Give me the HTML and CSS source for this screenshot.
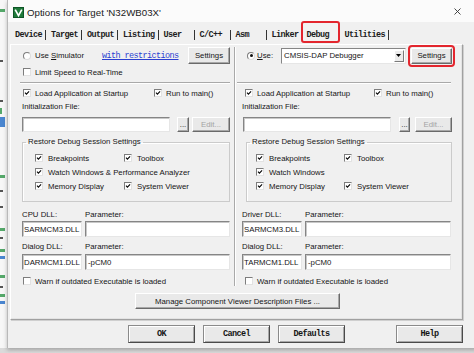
FILE: index.html
```html
<!DOCTYPE html>
<html>
<head>
<meta charset="utf-8">
<title>Options for Target</title>
<link rel="stylesheet" href="styles.css">
</head>
<body>
<div class="desktop">
  <div class="behind">
    <span class="frag g f1"></span>
    <span class="frag k f2"></span>
    <span class="frag k f3"></span>
    <span class="frag g f4"></span>
    <span class="frag b f5"></span>
    <span class="frag g f6"></span>
    <span class="frag k f7"></span>
    <span class="frag k f8"></span>
    <span class="frag g f9"></span>
    <span class="frag k f10"></span>
    <span class="frag g f11"></span>
    <span class="frag b f12"></span>
    <span class="frag g f13"></span>
    <span class="frag k f14"></span>
    <span class="frag g f15"></span>
    <span class="frag b f16"></span>
  </div>

  <div class="dialog">
    <div class="titlebar">
      <svg class="appicon" width="11" height="11" viewBox="0 0 11 11">
        <rect x="0" y="0" width="11" height="11" fill="#1f7a3a"/>
        <rect x="0.5" y="0.5" width="10" height="10" fill="none" stroke="#0e5526" stroke-width="1"/>
        <polyline points="2.2,2.6 5.5,8.6 8.8,2.6" fill="none" stroke="#ffffff" stroke-width="1.7"/>
      </svg>
      <span class="title">Options for Target 'N32WB03X'</span>
      <svg class="close" width="7" height="7" viewBox="0 0 7 7">
        <path d="M0.5 0.5 L6.5 6.5 M6.5 0.5 L0.5 6.5" stroke="#333" stroke-width="0.9" fill="none"/>
      </svg>
    </div>

    <div class="body">
      <div class="tabs">
        <span class="tab">Device</span>
        <span class="tab">Target</span>
        <span class="tab">Output</span>
        <span class="tab">Listing</span>
        <span class="tab">User</span>
        <span class="tab">C/C++</span>
        <span class="tab">Asm</span>
        <span class="tab">Linker</span>
        <span class="tab active">Debug</span>
        <span class="tab">Utilities</span>
      </div>

      <div class="panel">
        <div class="cols">
          <!-- LEFT COLUMN -->
          <div class="col col-left">
            <div class="row r1">
              <label class="radio"><span class="rb"></span><span>Use <u>S</u>imulator</span></label>
              <span class="link">with restrictions</span>
              <button class="btn set">Settings</button>
            </div>
            <label class="cb r2"><span class="box"></span>Limit Speed to Real-Time</label>
            <div class="hsep hsep-left"></div>
            <div class="row r3">
              <label class="cb load-l"><span class="box on"><svg viewBox="0 0 8 8"><path d="M1.3 3.6 L3.2 5.6 L6.8 1.8" fill="none" stroke="#000" stroke-width="1.4"/></svg></span>Load Application at Startup</label>
              <label class="cb"><span class="box on"><svg viewBox="0 0 8 8"><path d="M1.3 3.6 L3.2 5.6 L6.8 1.8" fill="none" stroke="#000" stroke-width="1.4"/></svg></span>Run to main()</label>
            </div>
            <div class="lbl r4">Initialization File:</div>
            <div class="row r5">
              <span class="input init"></span>
              <button class="btn dots">...</button>
              <button class="btn edit" disabled>Edit...</button>
            </div>
            <fieldset class="group group-left">
              <legend>Restore Debug Session Settings</legend>
              <div class="ggrid ggrid-left">
                <label class="cb"><span class="box on"><svg viewBox="0 0 8 8"><path d="M1.3 3.6 L3.2 5.6 L6.8 1.8" fill="none" stroke="#000" stroke-width="1.4"/></svg></span>Breakpoints</label>
                <label class="cb"><span class="box on"><svg viewBox="0 0 8 8"><path d="M1.3 3.6 L3.2 5.6 L6.8 1.8" fill="none" stroke="#000" stroke-width="1.4"/></svg></span>Toolbox</label>
                <label class="cb span2"><span class="box on"><svg viewBox="0 0 8 8"><path d="M1.3 3.6 L3.2 5.6 L6.8 1.8" fill="none" stroke="#000" stroke-width="1.4"/></svg></span>Watch Windows &amp; Performance Analyzer</label>
                <label class="cb"><span class="box on"><svg viewBox="0 0 8 8"><path d="M1.3 3.6 L3.2 5.6 L6.8 1.8" fill="none" stroke="#000" stroke-width="1.4"/></svg></span>Memory Display</label>
                <label class="cb"><span class="box on"><svg viewBox="0 0 8 8"><path d="M1.3 3.6 L3.2 5.6 L6.8 1.8" fill="none" stroke="#000" stroke-width="1.4"/></svg></span>System Viewer</label>
              </div>
            </fieldset>
            <div class="row r7">
              <span class="lbl dll-lbl">CPU DLL:</span>
              <span class="lbl">Parameter:</span>
            </div>
            <div class="row r8">
              <span class="input dll">SARMCM3.DLL</span>
              <span class="input param"></span>
            </div>
            <div class="row r9">
              <span class="lbl dll-lbl">Dialog DLL:</span>
              <span class="lbl">Parameter:</span>
            </div>
            <div class="row r10">
              <span class="input dll">DARMCM1.DLL</span>
              <span class="input param">-pCM0</span>
            </div>
            <label class="cb r11"><span class="box"></span>Warn if outdated Executable is loaded</label>
          </div>

          <div class="vsep"></div>

          <!-- RIGHT COLUMN -->
          <div class="col col-right">
            <div class="row r1">
              <label class="radio use"><span class="rb sel"></span><span><u>U</u>se:</span></label>
              <span class="combo"><span class="combo-text">CMSIS-DAP Debugger</span><span class="combo-btn"><svg width="5" height="3" viewBox="0 0 5 3"><path d="M0 0 H5 L2.5 3 Z" fill="#000"/></svg></span></span>
              <button class="btn set hl">Settings</button>
            </div>
            <div class="spacer r2"></div>
            <div class="hsep hsep-right"></div>
            <div class="row r3 ind">
              <label class="cb load-r"><span class="box on"><svg viewBox="0 0 8 8"><path d="M1.3 3.6 L3.2 5.6 L6.8 1.8" fill="none" stroke="#000" stroke-width="1.4"/></svg></span>Load Application at Startup</label>
              <label class="cb"><span class="box on"><svg viewBox="0 0 8 8"><path d="M1.3 3.6 L3.2 5.6 L6.8 1.8" fill="none" stroke="#000" stroke-width="1.4"/></svg></span>Run to main()</label>
            </div>
            <div class="lbl r4">Initialization File:</div>
            <div class="row r5 ind1">
              <span class="input init"></span>
              <button class="btn dots dots-r">...</button>
              <button class="btn edit edit-r" disabled>Edit...</button>
            </div>
            <fieldset class="group group-right">
              <legend>Restore Debug Session Settings</legend>
              <div class="ggrid ggrid-right">
                <label class="cb"><span class="box on"><svg viewBox="0 0 8 8"><path d="M1.3 3.6 L3.2 5.6 L6.8 1.8" fill="none" stroke="#000" stroke-width="1.4"/></svg></span>Breakpoints</label>
                <label class="cb"><span class="box on"><svg viewBox="0 0 8 8"><path d="M1.3 3.6 L3.2 5.6 L6.8 1.8" fill="none" stroke="#000" stroke-width="1.4"/></svg></span>Toolbox</label>
                <label class="cb span2"><span class="box on"><svg viewBox="0 0 8 8"><path d="M1.3 3.6 L3.2 5.6 L6.8 1.8" fill="none" stroke="#000" stroke-width="1.4"/></svg></span>Watch Windows</label>
                <label class="cb"><span class="box on"><svg viewBox="0 0 8 8"><path d="M1.3 3.6 L3.2 5.6 L6.8 1.8" fill="none" stroke="#000" stroke-width="1.4"/></svg></span>Memory Display</label>
                <label class="cb"><span class="box on"><svg viewBox="0 0 8 8"><path d="M1.3 3.6 L3.2 5.6 L6.8 1.8" fill="none" stroke="#000" stroke-width="1.4"/></svg></span>System Viewer</label>
              </div>
            </fieldset>
            <div class="row r7">
              <span class="lbl dll-lbl">Driver DLL:</span>
              <span class="lbl">Parameter:</span>
            </div>
            <div class="row r8">
              <span class="input dll">SARMCM3.DLL</span>
              <span class="input param param-r"></span>
            </div>
            <div class="row r9">
              <span class="lbl dll-lbl">Dialog DLL:</span>
              <span class="lbl">Parameter:</span>
            </div>
            <div class="row r10">
              <span class="input dll">TARMCM1.DLL</span>
              <span class="input param param-r">-pCM0</span>
            </div>
            <label class="cb r11 ind"><span class="box"></span>Warn if outdated Executable is loaded</label>
          </div>
        </div>

        <div class="manage-row">
          <button class="btn manage">Manage Component Viewer Description Files ...</button>
        </div>
      </div>

      <div class="footer">
        <button class="btn fbtn">OK</button>
        <button class="btn fbtn">Cancel</button>
        <button class="btn fbtn">Defaults</button>
        <button class="btn fbtn help">Help</button>
      </div>
    </div>
  </div>
</div>
</body>
</html>
```

FILE: styles.css
```css
* { box-sizing: border-box; }

html, body {
  margin: 0;
  padding: 0;
  width: 474px;
  height: 353px;
  overflow: hidden;
  background: #e4e4e4;
}

body {
  font-family: "Liberation Sans", Arial, sans-serif;
  font-size: 7.8px;
  color: #151515;
}

.desktop {
  display: flex;
  width: 474px;
  height: 353px;
  background: linear-gradient(#e9e9e9, #dadada);
}

/* window behind the dialog */
.behind {
  width: 7px;
  height: 348px;
  flex-shrink: 0;
  background: #f7f7f7;
  display: flex;
  flex-direction: column;
  align-items: flex-start;
}
.frag { display: block; height: 3px; width: 5px; }
.frag.g { background: #55a86a; }
.frag.b { background: #4a86d0; }
.frag.k { background: #555; height: 2px; width: 3px; }
.f1 { margin-top: 9px; }
.f2 { margin-top: 48px; }
.f3 { margin-top: 38px; }
.f4 { margin-top: 6px; height: 6px; width: 2px; }
.f5 { margin-top: 3px; height: 10px; width: 5px; background: #6ea0c8; }
.f6 { margin-top: 48px; }
.f7 { margin-top: 12px; }
.f8 { margin-top: 14px; }
.f9 { margin-top: 20px; }
.f10 { margin-top: 6px; }
.f11 { margin-top: 10px; }
.f12 { margin-top: 4px; }
.f13 { margin-top: 16px; }
.f14 { margin-top: 8px; }
.f15 { margin-top: 6px; }
.f16 { margin-top: 4px; }

/* dialog window */
.dialog {
  width: 470px;
  height: 348px;
  flex-shrink: 0;
  background: #f0f0f0;
  border-left: 1px solid #b9b9b9;
  box-shadow: 0 2px 4px rgba(0, 0, 0, 0.25);
  display: flex;
  flex-direction: column;
}

.titlebar {
  height: 22px;
  flex-shrink: 0;
  background: #fbfbfb;
  display: flex;
  align-items: center;
  padding: 0 16px 0 5px;
}
.appicon { display: block; margin-top: 3px; }
.title {
  margin-left: 3px;
  margin-top: 2px;
  font-size: 9.7px;
  color: #1a1a1a;
}
.close { margin-left: auto; margin-top: 1px; display: block; }

.body {
  flex: 1;
  padding: 0 0 5px 2px;
  display: flex;
  flex-direction: column;
}

/* tabs */
.tabs {
  height: 22px;
  display: flex;
  align-items: flex-end;
  padding-left: 0;
}
.tab {
  font-family: "Liberation Mono", "Courier New", monospace;
  font-weight: bold;
  font-size: 8.5px;
  letter-spacing: -0.6px;
  color: #1c1c1c;
  min-width: 36px;
  height: 10px;
  line-height: 10px;
  padding: 0 3px 0 5px;
  margin-bottom: 4px;
  border-right: 1px solid #333;
  white-space: nowrap;
}
.tab:first-child { min-width: 35px; }
.tab.active {
  position: relative;
  margin-left: -2px;
  margin-bottom: 1px;
  min-width: 39px;
  height: 22px;
  line-height: 24px;
  padding-left: 4px;
  border: 2px solid #e3262e;
  border-radius: 3px;
  background: #f2f2f2;
}

/* tab panel */
.panel {
  width: 453px;
  border: 1px solid;
  border-color: #ffffff #a0a0a0 #a0a0a0 #ffffff;
  box-shadow: 1px 1px 0 #cfcfcf, inset -1px -1px 0 #e3e3e3;
  padding: 2px 0 10px 0;
  display: flex;
  flex-direction: column;
}

.cols {
  display: flex;
  align-items: stretch;
  padding-left: 11px;
}

.col {
  display: flex;
  flex-direction: column;
}
.col-left { width: 208px; }
.col-right { width: 210px; }

.vsep {
  width: 12px;
  position: relative;
  background: linear-gradient(to right, transparent 4px, #a9a9a9 4px, #a9a9a9 5px, #ffffff 5px, #ffffff 6px, transparent 6px);
}

.row { display: flex; align-items: center; }
.lbl { display: block; height: 10px; line-height: 10px; white-space: nowrap; }

.r1 { height: 17px; }
.r2 { margin-top: 3px; height: 10px; }
.spacer { display: block; }
.hsep {
  margin-top: 5px;
  height: 2px;
  border-top: 1px solid #a9a9a9;
  border-bottom: 1px solid #ffffff;
}
.hsep-left { margin-left: -2px; }
.hsep-right { margin-left: -5px; margin-right: 1px; }
.r3 { margin-top: 4px; height: 10px; }
.r4 { margin-top: 4px; }
.r5 { margin-top: 5px; height: 15px; }
.r7 { margin-top: 8px; height: 10px; }
.r8 { margin-top: 1px; height: 16px; }
.r9 { margin-top: 5px; height: 10px; }
.r10 { margin-top: 2px; height: 16px; }
.r11 { margin-top: 6px; }

.ind { padding-left: 2px; }
.ind1 { padding-left: 1px; }

/* radio */
.radio {
  display: flex;
  align-items: center;
  gap: 4px;
  white-space: nowrap;
  margin-left: 1px;
}
.radio.use { margin-left: 5px; gap: 2px; }
.rb {
  width: 8px;
  height: 8px;
  border-radius: 50%;
  border: 1px solid;
  border-color: #7d7d7d #dcdcdc #dcdcdc #7d7d7d;
  background: #ffffff;
  position: relative;
  display: block;
}
.rb.sel::after {
  content: "";
  position: absolute;
  left: 1.5px;
  top: 1.5px;
  width: 3px;
  height: 3px;
  border-radius: 50%;
  background: #111;
}
u { text-decoration: underline; text-underline-offset: 1px; }

.link {
  font-family: "Liberation Mono", "Courier New", monospace;
  font-size: 8.5px;
  letter-spacing: -0.6px;
  color: #2b3fd1;
  text-decoration: underline;
  margin-left: 18px;
  white-space: nowrap;
}

/* checkbox */
.cb {
  display: flex;
  align-items: center;
  gap: 4px;
  height: 10px;
  white-space: nowrap;
  margin-left: 1px;
}
.box {
  width: 8px;
  height: 8px;
  flex-shrink: 0;
  display: block;
  border: 1px solid;
  border-color: #7d7d7d #e2e2e2 #e2e2e2 #7d7d7d;
  background: #ffffff;
}
.box svg { display: block; width: 6px; height: 6px; }
.load-l { width: 130px; }
.load-r { width: 128px; }

/* buttons */
.btn {
  font-family: "Liberation Sans", Arial, sans-serif;
  font-size: 7.8px;
  color: #151515;
  background: #e9e9e9;
  border: 1px solid;
  border-color: #ffffff #6a6a6a #6a6a6a #ffffff;
  box-shadow: inset -1px -1px 0 #a8a8a8;
  padding: 0;
  margin: 0;
  display: flex;
  align-items: center;
  justify-content: center;
  white-space: nowrap;
}
.btn.set {
  width: 42px;
  height: 17px;
  margin-left: auto;
}
.btn.set.hl {
  height: 16px;
  margin-left: 5px;
  outline: 2px solid #e3262e;
  outline-offset: 1px;
  border-radius: 1px;
}
.btn.dots { width: 12px; height: 15px; margin-left: 7px; }
.btn.dots-r { margin-left: 8px; width: 11px; }
.btn.edit { width: 38px; height: 15px; margin-left: 3px; color: #a3a3a3; }
.btn.edit-r { margin-left: 5px; width: 37px; }

/* inputs */
.input {
  display: flex;
  align-items: center;
  background: #ffffff;
  border: 1px solid;
  border-color: #858585 #e6e6e6 #e6e6e6 #858585;
  box-shadow: inset 1px 1px 0 #c8c8c8;
  padding-left: 2px;
  height: 100%;
  white-space: nowrap;
  overflow: hidden;
}
.input.init { width: 148px; }
.input.dll { width: 60px; padding-left: 1px; }
.input.param { width: 145px; margin-left: 3px; }
.input.param-r { width: 146px; }
.dll-lbl { width: 63px; }

/* combo */
.combo {
  margin-left: 8px;
  width: 128px;
  height: 16px;
  background: #ffffff;
  border: 1px solid;
  border-color: #858585 #e6e6e6 #e6e6e6 #858585;
  display: flex;
  align-items: center;
  padding-left: 2px;
}
.combo-text { flex: 1; white-space: nowrap; }
.combo-btn {
  width: 10px;
  height: 12px;
  margin-right: 1px;
  background: #ececec;
  border: 1px solid;
  border-color: #ffffff #7a7a7a #7a7a7a #ffffff;
  display: flex;
  align-items: center;
  justify-content: center;
}
.combo-btn svg { display: block; }

/* group boxes */
.group {
  margin: 5px 0 0 0;
  border: 1px solid #cbcbcb;
  box-shadow: inset 1px 1px 0 #ffffff;
  min-inline-size: 0;
  padding: 4px 0 8px 12px;
}
.group legend {
  padding: 0 2px;
  margin-left: -9px;
  line-height: 10px;
  height: 10px;
  white-space: nowrap;
}
.group-right {
  margin-left: 4px;
  padding-left: 9px;
}
.group-right legend { margin-left: -6px; }

.ggrid {
  display: grid;
  grid-auto-rows: 14px;
  align-items: center;
}
.ggrid-left { grid-template-columns: 89px auto; }
.ggrid-right { grid-template-columns: 88px auto; }
.ggrid .cb { margin-left: 0; gap: 5px; }
.span2 { grid-column: 1 / -1; }

/* manage row */
.manage-row {
  margin-top: 7px;
  display: flex;
  justify-content: center;
}
.btn.manage { width: 205px; height: 16px; margin-left: 2px; }

/* footer */
.footer {
  margin-top: 5px;
  width: 453px;
  display: flex;
  gap: 8px;
  padding-left: 118px;
}
.btn.fbtn {
  width: 67px;
  height: 18px;
  font-family: "Liberation Mono", "Courier New", monospace;
  font-weight: bold;
  font-size: 8.5px;
  letter-spacing: -0.6px;
  border-color: #8a8a8a #4a4a4a #4a4a4a #8a8a8a;
  box-shadow: inset 1px 1px 0 #ffffff, inset -1px -1px 0 #a8a8a8;
}
.btn.help { margin-left: auto; }
```
